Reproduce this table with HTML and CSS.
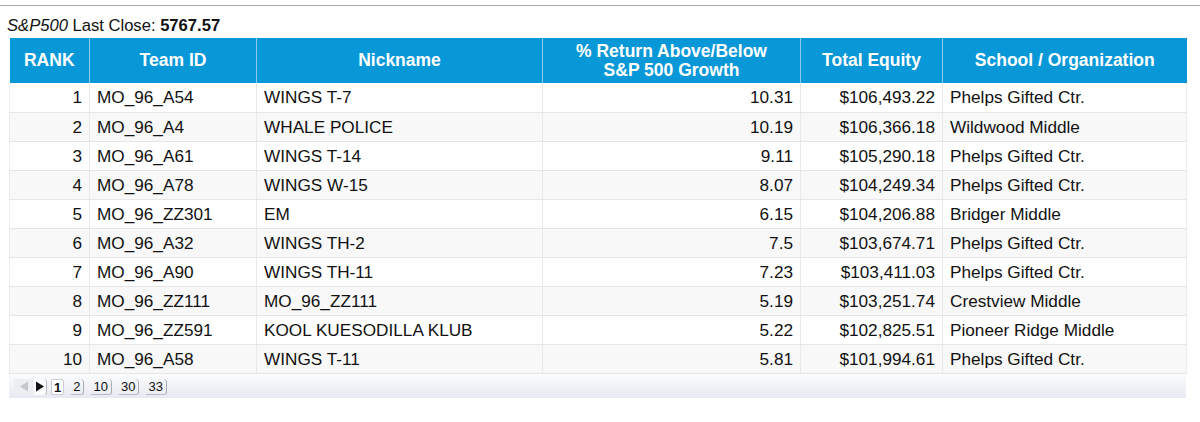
FILE: index.html
```html
<!DOCTYPE html>
<html>
<head>
<meta charset="utf-8">
<link rel="stylesheet" href="styles.css">
</head>
<body>
<div class="page">
  <div class="title"><i>S&amp;P500</i> Last Close: <b>5767.57</b></div>
  <div class="grid">
    <table class="ranks">
      <colgroup>
        <col class="c-rank"><col class="c-team"><col class="c-nick"><col class="c-ret"><col class="c-eq"><col class="c-school">
      </colgroup>
      <thead>
        <tr>
          <th>RANK</th>
          <th>Team ID</th>
          <th>Nickname</th>
          <th>% Return Above/Below<br>S&amp;P 500 Growth</th>
          <th>Total Equity</th>
          <th>School / Organization</th>
        </tr>
      </thead>
      <tbody>
        <tr><td class="num">1</td><td>MO_96_A54</td><td>WINGS T-7</td><td class="num">10.31</td><td class="num">$106,493.22</td><td>Phelps Gifted Ctr.</td></tr>
        <tr><td class="num">2</td><td>MO_96_A4</td><td>WHALE POLICE</td><td class="num">10.19</td><td class="num">$106,366.18</td><td>Wildwood Middle</td></tr>
        <tr><td class="num">3</td><td>MO_96_A61</td><td>WINGS T-14</td><td class="num">9.11</td><td class="num">$105,290.18</td><td>Phelps Gifted Ctr.</td></tr>
        <tr><td class="num">4</td><td>MO_96_A78</td><td>WINGS W-15</td><td class="num">8.07</td><td class="num">$104,249.34</td><td>Phelps Gifted Ctr.</td></tr>
        <tr><td class="num">5</td><td>MO_96_ZZ301</td><td>EM</td><td class="num">6.15</td><td class="num">$104,206.88</td><td>Bridger Middle</td></tr>
        <tr><td class="num">6</td><td>MO_96_A32</td><td>WINGS TH-2</td><td class="num">7.5</td><td class="num">$103,674.71</td><td>Phelps Gifted Ctr.</td></tr>
        <tr><td class="num">7</td><td>MO_96_A90</td><td>WINGS TH-11</td><td class="num">7.23</td><td class="num">$103,411.03</td><td>Phelps Gifted Ctr.</td></tr>
        <tr><td class="num">8</td><td>MO_96_ZZ111</td><td>MO_96_ZZ111</td><td class="num">5.19</td><td class="num">$103,251.74</td><td>Crestview Middle</td></tr>
        <tr><td class="num">9</td><td>MO_96_ZZ591</td><td>KOOL KUESODILLA KLUB</td><td class="num">5.22</td><td class="num">$102,825.51</td><td>Pioneer Ridge Middle</td></tr>
        <tr><td class="num">10</td><td>MO_96_A58</td><td>WINGS T-11</td><td class="num">5.81</td><td class="num">$101,994.61</td><td>Phelps Gifted Ctr.</td></tr>
      </tbody>
    </table>
    <div class="pager">
      <span class="arrow disabled"><svg width="10" height="11" viewBox="0 0 10 11"><path d="M9 0.5 L1 5.5 L9 10.5 Z" fill="#c3c7cd"/></svg></span>
      <span class="arrow next"><svg width="10" height="11" viewBox="0 0 10 11"><path d="M1 0.5 L9 5.5 L1 10.5 Z" fill="#111"/></svg></span>
      <span class="pg current">1</span>
      <span class="pg">2</span>
      <span class="pg">10</span>
      <span class="pg">30</span>
      <span class="pg">33</span>
    </div>
  </div>
</div>
</body>
</html>
```

FILE: styles.css
```css
html, body {
  margin: 0;
  padding: 0;
  background: #ffffff;
}

.page {
  margin-top: 5px;
  border-top: 1px solid #a8a8a8;
  font-family: "Liberation Sans", Arial, sans-serif;
  color: #111;
}

.title {
  padding: 10px 0 2px 7px;
  font-size: 16.6px;
  line-height: 20px;
}

.grid {
  margin-left: 9px;
  width: 1177px;
}

.ranks {
  border-collapse: collapse;
  table-layout: fixed;
  width: 1177px;
  font-size: 17.2px;
}

.c-rank { width: 80px; }
.c-team { width: 167px; }
.c-nick { width: 286px; }
.c-ret { width: 258px; }
.c-eq { width: 142px; }
.c-school { width: 244px; }

.ranks th {
  background: #0898d8;
  color: #fff;
  font-weight: bold;
  font-size: 17.5px;
  height: 45px;
  padding: 0 4px;
  line-height: 19px;
  text-align: center;
  border-left: 1px solid #8ccbea;
  box-sizing: border-box;
}

.ranks th:first-child {
  border-left: none;
}

.ranks td {
  height: 29px;
  box-sizing: border-box;
  padding: 0 7px;
  line-height: 20px;
  border-left: 1px solid #e9e9e9;
  border-bottom: 1px solid #e6e6e6;
  white-space: nowrap;
}

.ranks td:first-child {
  border-left: 1px solid #ececec;
}

.ranks td:last-child {
  border-right: 1px solid #ececec;
}

.ranks tbody tr:nth-child(even) td {
  background: #f8f8f8;
}

.ranks td.num {
  text-align: right;
}

.pager {
  height: 24px;
  background: linear-gradient(#fbfcfd, #e6e9f0);
  display: flex;
  align-items: center;
  padding-left: 5px;
  font-size: 13px;
  font-family: "Liberation Sans", Arial, sans-serif;
}

.arrow {
  height: 16px;
  display: flex;
  align-items: center;
  justify-content: center;
  box-sizing: border-box;
  margin-top: 2px;
}

.arrow.disabled {
  width: 20px;
  background: #eceef1;
}

.arrow.next {
  width: 13px;
  background: #fafbfc;
  border-right: 1px solid #b7bbc2;
  border-radius: 0 3px 3px 0;
}

.pg {
  height: 16px;
  line-height: 15px;
  box-sizing: border-box;
  padding: 0 3px 0 2px;
  margin-left: 7px;
  border-right: 1px solid #a9acb3;
  border-bottom: 1px solid #b8bbc1;
  border-radius: 0 4px 3px 0;
  color: #111;
  margin-top: 2px;
}

.pg.current {
  margin-left: 4px;
  background: #fff;
  font-weight: bold;
  border: 1px solid #c9ccd2;
  border-radius: 2px;
  padding: 0 2px;
}
```
